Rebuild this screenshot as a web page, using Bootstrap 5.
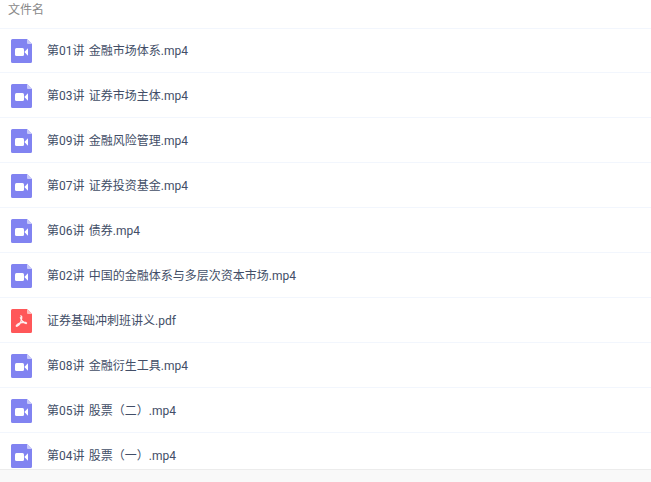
<!DOCTYPE html>
<html lang="zh-CN">
<head>
<meta charset="utf-8">
<meta name="viewport" content="width=device-width, initial-scale=1">
<title>文件名</title>
<link href="https://cdn.jsdelivr.net/npm/bootstrap@5.3.0/dist/css/bootstrap.min.css" rel="stylesheet">
<style>
body{font:12px/18px Roboto,"Noto Sans CJK SC",sans-serif;color:#424e67;background:#fff}
.file-page{height:482px}
.file-head{height:28px;padding:1px 0 0 8px;color:#888}
.file-list{height:441px}
.file-row{height:45px;padding:11px 11px 0;border-bottom:1px solid #f2f6fd;gap:15px}
.file-row:first-child{border-top:1px solid #f2f6fd;padding-top:10px}
.file-row svg{width:21px;height:24px}
.file-name{padding-top:3px;word-spacing:1.4px}
.file-foot{border-top:1px solid #ececec;background:#f9f9f9}
</style>
</head>
<body>
<svg class="d-none" aria-hidden="true">
<symbol id="video" viewBox="0 0 21 24"><path fill="#8183f1" d="M1.5 0H16l5 5v17.5a1.5 1.5 0 0 1-1.5 1.5h-18A1.5 1.5 0 0 1 0 22.5v-21A1.5 1.5 0 0 1 1.5 0z"/><path fill="#c9caf9" d="M16 0l5 5h-4a1 1 0 0 1-1-1z"/><rect x="4" y="9" width="9" height="8" rx="1.5" fill="#fff"/><path fill="#fff" d="M13.8 12.4L17 9.3v7.4l-3.2-3.1z"/></symbol>
<symbol id="pdf" viewBox="0 0 21 24"><path fill="#ff5759" d="M1.5 0H16l5 5v17.5a1.5 1.5 0 0 1-1.5 1.5h-18A1.5 1.5 0 0 1 0 22.5v-21A1.5 1.5 0 0 1 1.5 0z"/><path fill="#ffbcbd" d="M16 0l5 5h-4a1 1 0 0 1-1-1z"/><path fill="none" stroke="#fff" stroke-opacity=".9" stroke-width="1.3" stroke-linecap="round" stroke-linejoin="round" d="M9.7 6.8q1.2 0 1 2.3C10.3 12.3 8.2 16 6 17.3q-1 .2-.6-.9C7.300 14.3 11.5 13.2 15 13.5q1 .4.2 1C12.9 14.3 10.2 11.5 9.4 8.6"/></symbol>
</svg>
<main class="file-page d-flex flex-column overflow-hidden">
<header class="file-head">文件名</header>
<ul class="file-list list-unstyled mb-0 overflow-hidden flex-shrink-0">
<li class="file-row d-flex align-items-start"><svg><use href="#video"/></svg><span class="file-name">第01讲 金融市场体系.mp4</span></li>
<li class="file-row d-flex align-items-start"><svg><use href="#video"/></svg><span class="file-name">第03讲 证券市场主体.mp4</span></li>
<li class="file-row d-flex align-items-start"><svg><use href="#video"/></svg><span class="file-name">第09讲 金融风险管理.mp4</span></li>
<li class="file-row d-flex align-items-start"><svg><use href="#video"/></svg><span class="file-name">第07讲 证券投资基金.mp4</span></li>
<li class="file-row d-flex align-items-start"><svg><use href="#video"/></svg><span class="file-name">第06讲 债券.mp4</span></li>
<li class="file-row d-flex align-items-start"><svg><use href="#video"/></svg><span class="file-name">第02讲 中国的金融体系与多层次资本市场.mp4</span></li>
<li class="file-row d-flex align-items-start"><svg><use href="#pdf"/></svg><span class="file-name">证券基础冲刺班讲义.pdf</span></li>
<li class="file-row d-flex align-items-start"><svg><use href="#video"/></svg><span class="file-name">第08讲 金融衍生工具.mp4</span></li>
<li class="file-row d-flex align-items-start"><svg><use href="#video"/></svg><span class="file-name">第05讲 股票（二）.mp4</span></li>
<li class="file-row d-flex align-items-start"><svg><use href="#video"/></svg><span class="file-name">第04讲 股票（一）.mp4</span></li>
</ul>
<footer class="file-foot flex-grow-1"></footer>
</main>
<script src="https://cdn.jsdelivr.net/npm/bootstrap@5.3.0/dist/js/bootstrap.bundle.min.js"></script>
</body>
</html>
